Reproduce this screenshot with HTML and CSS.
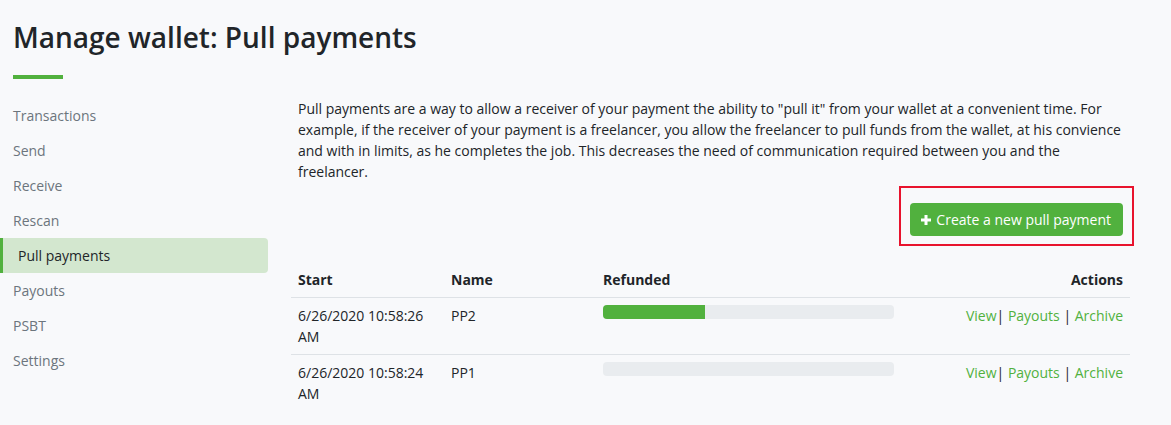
FILE: index.html
```html
<!DOCTYPE html>
<html>
<head>
<meta charset="utf-8">
<link rel="stylesheet" href="styles.css">
</head>
<body>
<div class="page">
  <h1 class="title">Manage wallet: Pull payments</h1>
  <div class="underline"></div>
  <div class="row">
    <nav class="sidebar">
      <a class="nav-item">Transactions</a>
      <a class="nav-item">Send</a>
      <a class="nav-item">Receive</a>
      <a class="nav-item">Rescan</a>
      <a class="nav-item active">Pull payments</a>
      <a class="nav-item">Payouts</a>
      <a class="nav-item">PSBT</a>
      <a class="nav-item">Settings</a>
    </nav>
    <main class="content">
      <p class="intro">Pull payments are a way to allow a receiver of your payment the ability to "pull it" from your wallet at a convenient time. For example, if the receiver of your payment is a freelancer, you allow the freelancer to pull funds from the wallet, at his convience and with in limits, as he completes the job. This decreases the need of communication required between you and the freelancer.</p>
      <div class="actions-row">
        <div class="highlight">
          <button class="btn"><svg class="plus" viewBox="0 0 10 10" width="10" height="10"><path d="M3.5 0h3v3.5H10v3H6.5V10h-3V6.5H0v-3h3.5z" fill="#fff"/></svg>Create a new pull payment</button>
        </div>
      </div>
      <table class="pp-table">
        <colgroup>
          <col class="c-start"><col class="c-name"><col class="c-ref"><col class="c-act">
        </colgroup>
        <thead>
          <tr><th>Start</th><th>Name</th><th>Refunded</th><th class="right">Actions</th></tr>
        </thead>
        <tbody>
          <tr>
            <td>6/26/2020 10:58:26 AM</td>
            <td>PP2</td>
            <td><div class="progress"><div class="bar" style="width:35%"></div></div></td>
            <td class="right"><a class="lnk">View</a>| <a class="lnk">Payouts</a> | <a class="lnk">Archive</a></td>
          </tr>
          <tr>
            <td>6/26/2020 10:58:24 AM</td>
            <td>PP1</td>
            <td><div class="progress"><div class="bar" style="width:0%"></div></div></td>
            <td class="right"><a class="lnk">View</a>| <a class="lnk">Payouts</a> | <a class="lnk">Archive</a></td>
          </tr>
        </tbody>
      </table>
    </main>
  </div>
</div>
</body>
</html>
```

FILE: styles.css
```css
html, body {
  margin: 0;
  padding: 0;
}
body {
  background: #f8f9fb;
  font-family: "Open Sans", "Noto Sans", sans-serif;
  font-size: 14px;
  line-height: 21px;
  color: #212529;
}
.page {
  padding-top: 20px;
}
.title {
  margin: 0 0 0 13px;
  font-size: 28px;
  line-height: 34px;
  font-weight: 600;
  color: #212529;
}
.underline {
  width: 50px;
  height: 4px;
  background: #51b13e;
  margin: 21px 0 0 13px;
}
.row {
  display: flex;
  margin-top: 19px;
}
.sidebar {
  width: 268px;
  display: flex;
  flex-direction: column;
  flex-shrink: 0;
}
.nav-item {
  display: block;
  padding: 7px 13px;
  color: #6c757d;
  text-decoration: none;
}
.nav-item.active {
  background: #d3e7cf;
  border-left: 3px solid #51b13e;
  padding-left: 15px;
  color: #212529;
  border-radius: 0 4px 4px 0;
}
.content {
  margin-left: 23px;
  width: 839px;
}
.intro {
  margin: 0;
  padding: 0 7px;
}
.actions-row {
  display: flex;
  justify-content: flex-end;
  margin-top: 4px;
  margin-right: -4px;
}
.highlight {
  border: 2px solid #e8132d;
  padding: 15px 9px 8px 9px;
  display: flex;
}
.btn {
  display: inline-flex;
  align-items: center;
  gap: 5px;
  background: #51b13e;
  color: #fff;
  border: none;
  border-radius: 4px;
  padding: 6px 12px 6px 11px;
  height: 33px;
  font-family: inherit;
  font-size: 14px;
  line-height: 21px;
}
.plus {
  display: block;
}
.pp-table {
  margin-top: 16px;
  width: 839px;
  border-collapse: collapse;
  table-layout: fixed;
}
.c-start { width: 153px; }
.c-name { width: 152px; }
.c-ref { width: 305px; }
.c-act { width: 229px; }
.pp-table th {
  text-align: left;
  padding: 7px;
  font-weight: 700;
  border-bottom: 1px solid #dee2e6;
}
.pp-table td {
  padding: 7px;
  vertical-align: top;
  border-top: 1px solid #dee2e6;
}
.pp-table .right {
  text-align: right;
}
.progress {
  height: 14px;
  background: #e9ecef;
  border-radius: 4px;
  overflow: hidden;
}
.bar {
  height: 100%;
  background: #51b13e;
}
.lnk {
  color: #51b13e;
  text-decoration: none;
}
```
